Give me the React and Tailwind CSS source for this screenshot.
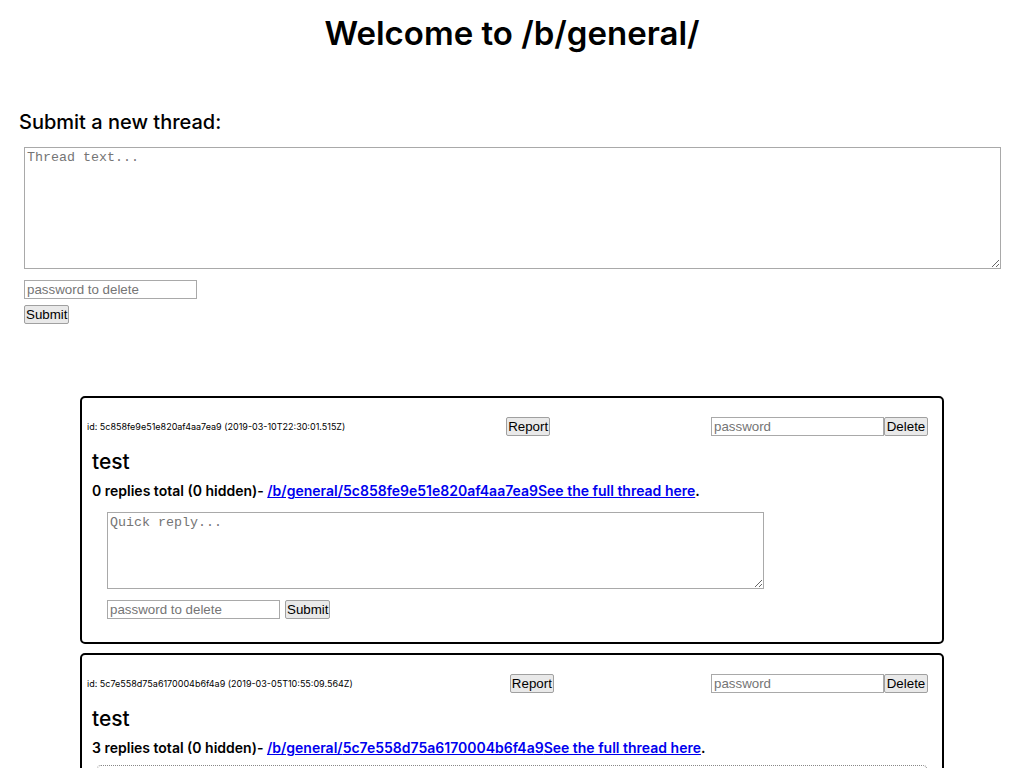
import React from 'react';

const sans = { fontFamily: 'Inter, "Noto Sans", sans-serif' };

const threads = [
  {
    id: '5c858fe9e51e820af4aa7ea9',
    date: '2019-03-10T22:30:01.515Z',
    text: 'test',
    replies: 0,
    hidden: 0,
  },
  {
    id: '5c7e558d75a6170004b6f4a9',
    date: '2019-03-05T10:55:09.564Z',
    text: 'test',
    replies: 3,
    hidden: 0,
  },
];

const inputCls =
  'border border-[#a9a9a9] bg-white px-[2px] h-[19px] text-[13.33px] placeholder:text-[#757575] outline-none font-["Liberation_Sans",Arial,sans-serif]';
const btnCls =
  'border border-[#a0a0a0] bg-[#e9e9e9] rounded-[2px] px-[1px] h-[19px] text-[13.33px] leading-none text-black font-["Liberation_Sans",Arial,sans-serif]';
const areaCls =
  'block border border-[#a9a9a9] bg-white p-[2px] text-[13.33px] leading-[15px] placeholder:text-[#757575] outline-none font-["Liberation_Mono","DejaVu_Sans_Mono",monospace]';

const Thread = ({ t, last, first }) => (
  <div className={`mx-[80px] border-2 border-black rounded-[5px] px-[5px] pt-[19px] ${last ? 'pb-[30px]' : 'pb-[23px]'} ${first ? '' : 'mt-[9px]'}`}>
    <div className="flex items-center justify-between h-[19px] pr-[9px]">
      <span className="text-[9px] text-black" style={sans}>
        id: {t.id} ({t.date})
      </span>
      <button className={`${btnCls} w-[44px]`}>Report</button>
      <div className="flex items-center">
        <input type="password" placeholder="password" className={`${inputCls} w-[173px]`} />
        <button className={`${btnCls} w-[44px]`}>Delete</button>
      </div>
    </div>
    <div className="pl-[5px] mt-[12px]" style={sans}>
      <h3 className="text-[21px] font-medium leading-[28px]">{t.text}</h3>
      <p className="text-[14px] font-semibold leading-[20px] mt-[5px]">
        {t.replies} replies total ({t.hidden} hidden)-{' '}
        <a href="#" className="text-[#0000ee] underline">
          /b/general/{t.id}See the full thread here
        </a>
        .
      </p>
    </div>
    {last ? (
      <div className="mx-[10px] mt-[7px] h-[20px] border border-dotted border-[#888] rounded-[4px]"></div>
    ) : (
      <div className="pl-[20px] mt-[11px]">
        <textarea placeholder="Quick reply..." className={`${areaCls} w-[657px] h-[77px]`}></textarea>
        <div className="flex items-center gap-[5px] mt-[11px]">
          <input type="password" placeholder="password to delete" className={`${inputCls} w-[173px]`} />
          <button className={`${btnCls} w-[45px]`}>Submit</button>
        </div>
      </div>
    )}
  </div>
);

const App = () => {
  return (
    <div className="h-screen bg-white text-black overflow-hidden" style={sans}>
      <h1 className="text-center text-[33px] font-semibold leading-[40px] pt-[13px]">
        Welcome to /b/general/
      </h1>

      <h3 className="ml-[19px] mt-[57px] text-[20px] font-medium leading-[24px]">Submit a new thread:</h3>

      <div className="ml-[24px] mt-[13px]">
        <textarea placeholder="Thread text..." className={`${areaCls} w-[977px] h-[122px]`}></textarea>
        <input type="password" placeholder="password to delete" className={`${inputCls} block w-[173px] mt-[11px]`} />
        <button className={`${btnCls} block w-[45px] mt-[6px]`}>Submit</button>
      </div>

      <div className="mt-[72px]">
        {threads.map((t, i) => (
          <Thread key={t.id} t={t} first={i === 0} last={i === threads.length - 1} />
        ))}
      </div>
    </div>
  );
};

export default App;
